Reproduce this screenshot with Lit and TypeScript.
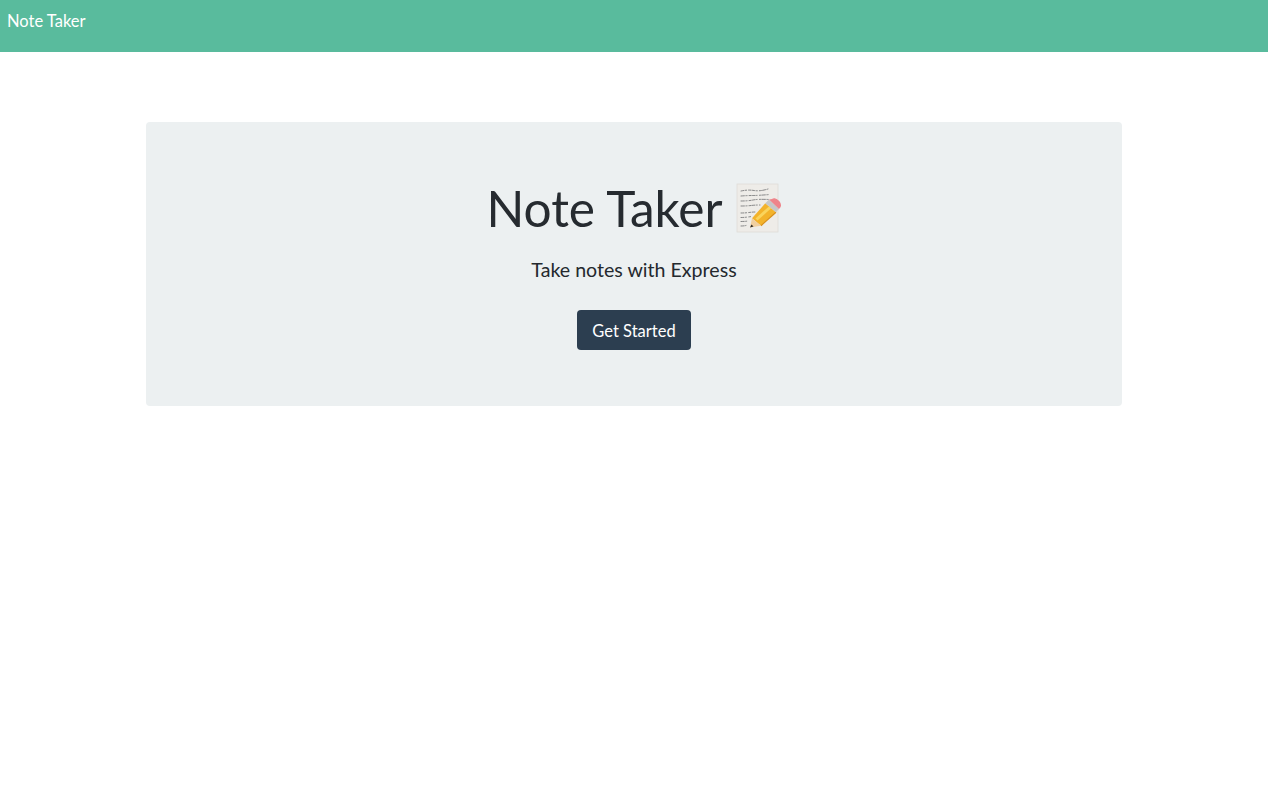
import { LitElement, html, css } from 'lit'
import { customElement } from 'lit/decorators.js'

@customElement('app-root')
export class AppRoot extends LitElement {
    static styles = css`
        :host {
            display: block;
            min-height: 800px;
            background: #ffffff;
            font-family: Lato, 'Liberation Sans', sans-serif;
            color: #212529;
        }

        .navbar {
            height: 52px;
            box-sizing: border-box;
            padding: 9px 7px 0;
            background: #59bb9d;
        }

        .brand {
            font-size: 16.5px;
            line-height: 24px;
            color: #ffffff;
        }

        .jumbotron {
            width: 976px;
            height: 284px;
            box-sizing: border-box;
            margin: 70px auto 0;
            padding-top: 56px;
            display: flex;
            flex-direction: column;
            align-items: center;
            background: #ecf0f1;
            border-radius: 4px;
        }

        .title {
            display: flex;
            align-items: center;
            gap: 13px;
            margin: 0;
            height: 60px;
            font-size: 49.6px;
            font-weight: 400;
            line-height: 60px;
            color: #262b30;
        }

        .memo {
            width: 46px;
            height: 52px;
        }

        .lead {
            margin: 19px 0 0;
            font-size: 19.6px;
            line-height: 26px;
            color: #24292e;
        }

        .button {
            width: 114px;
            height: 40px;
            margin-top: 27px;
            padding: 2px 0 0;
            border: 0;
            border-radius: 4px;
            background: #2c3e50;
            color: #ffffff;
            font: inherit;
            font-size: 16.5px;
        }
    `

    render() {
        return html`
            <nav class="navbar"><span class="brand">Note Taker</span></nav>
            <main class="jumbotron">
                <h1 class="title">
                    Note Taker
                    <svg class="memo" viewBox="0 0 46 52" aria-hidden="true">
                        <rect x="1" y="2" width="41" height="48" fill="#eeece8" stroke="#dfddd8" stroke-width="0.8" />
                        <g fill="none" stroke="#5a5c5f" stroke-width="0.7" stroke-linecap="round" stroke-dasharray="3 1.400 1.200 2 2 1.300">
                            <path d="M5 9q7-1.500 13-.5t14-1.500" />
                            <path d="M5 14q7-.5 12-.5t17-1" />
                            <path d="M5 19q7 0 12-1t16-.5" />
                            <path d="M5 24q6 0 10-.5t9-.5" />
                            <path d="M5 31q4 0 8-.5t6-.5" />
                            <path d="M5 35.500q3 0 7-.5t3-.5" />
                            <path d="M5 39.500q4 0 7-.5" />
                            <path d="M5 44q3 0 5-.5" />
                        </g>
                        <path d="M29.300 21.300L40 30.300 25 43.700 16 36.300z" fill="#f3b32b" />
                        <path d="M20.500 37.500L34.500 25" stroke="#fad45c" stroke-width="3" fill="none" />
                        <path d="M25 43.700L40 30.300" stroke="#d8901c" stroke-width="1.200" fill="none" />
                        <path d="M16 36.300l9 7.400-11 1.800z" fill="#f0cfa0" />
                        <path d="M15.500 42.500l-1.500 3 3.500-1z" fill="#2f2d2a" />
                        <path d="M29.300 21.300L40 30.300 43 27 33 17.500z" fill="#c6c8c9" />
                        <path d="M33 17.500L43 27l1.500-1.800c1.500-2.200-.3-5.700-2.800-7.500-2.200-1.700-4.300-2-5.700-.7z" fill="#ee858b" />
                    </svg>
                </h1>
                <p class="lead">Take notes with Express</p>
                <button class="button">Get Started</button>
            </main>
        `
    }
}
